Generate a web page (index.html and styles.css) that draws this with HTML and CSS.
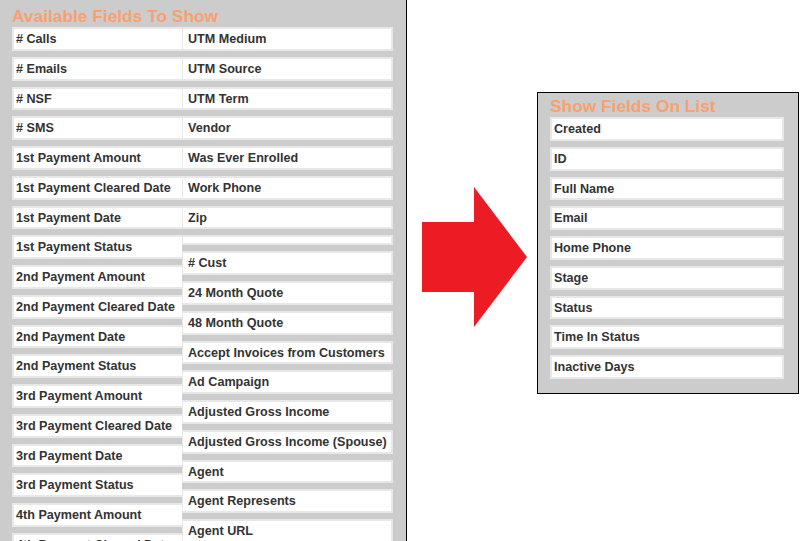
FILE: index.html
```html
<!DOCTYPE html>
<html lang="en">
<head>
    <meta charset="UTF-8">
    <meta name="viewport" content="width=device-width, initial-scale=1.0">
    <title>List Fields</title>
    <link rel="stylesheet" href="styles.css">
</head>
<body>
    <div class="fields-page">
        <div class="field-panel available-panel">
            <h2 class="panel-title">Available Fields To Show</h2>
            <div class="field-columns">
                <div class="field-list col-a">
                    <div class="field"># Calls</div>
                    <div class="field"># Emails</div>
                    <div class="field"># NSF</div>
                    <div class="field"># SMS</div>
                    <div class="field">1st Payment Amount</div>
                    <div class="field">1st Payment Cleared Date</div>
                    <div class="field">1st Payment Date</div>
                    <div class="field">1st Payment Status</div>
                    <div class="field">2nd Payment Amount</div>
                    <div class="field">2nd Payment Cleared Date</div>
                    <div class="field">2nd Payment Date</div>
                    <div class="field">2nd Payment Status</div>
                    <div class="field">3rd Payment Amount</div>
                    <div class="field">3rd Payment Cleared Date</div>
                    <div class="field">3rd Payment Date</div>
                    <div class="field">3rd Payment Status</div>
                    <div class="field">4th Payment Amount</div>
                    <div class="field">4th Payment Cleared Date</div>
                    <div class="field">4th Payment Date</div>
                </div>
                <div class="field-list col-b">
                    <div class="field">UTM Medium</div>
                    <div class="field">UTM Source</div>
                    <div class="field">UTM Term</div>
                    <div class="field">Vendor</div>
                    <div class="field">Was Ever Enrolled</div>
                    <div class="field">Work Phone</div>
                    <div class="field">Zip</div>
                    <div class="field"></div>
                    <div class="field"># Cust</div>
                    <div class="field">24 Month Quote</div>
                    <div class="field">48 Month Quote</div>
                    <div class="field">Accept Invoices from Customers</div>
                    <div class="field">Ad Campaign</div>
                    <div class="field">Adjusted Gross Income</div>
                    <div class="field">Adjusted Gross Income (Spouse)</div>
                    <div class="field">Agent</div>
                    <div class="field">Agent Represents</div>
                    <div class="field">Agent URL</div>
                    <div class="field">Alt Phone</div>
                </div>
            </div>
        </div>

        <svg class="move-arrow" width="130" height="140" viewBox="0 0 130 140">
            <polygon points="15,35 67,35 67,0 120,70 67,140 67,105 15,105" fill="#ed1c24"/>
        </svg>

        <div class="field-panel list-panel">
            <h2 class="panel-title">Show Fields On List</h2>
            <div class="field-list">
                <div class="field">Created</div>
                <div class="field">ID</div>
                <div class="field">Full Name</div>
                <div class="field">Email</div>
                <div class="field">Home Phone</div>
                <div class="field">Stage</div>
                <div class="field">Status</div>
                <div class="field">Time In Status</div>
                <div class="field">Inactive Days</div>
            </div>
        </div>
    </div>
</body>
</html>
```

FILE: styles.css
```css
/* Base styles */
body {
    font-family: 'Liberation Sans', Arial, sans-serif;
    background-color: #fff;
    margin: 0;
    padding: 0;
    height: 541px;
    overflow: hidden;
}

.fields-page {
    display: flex;
    align-items: flex-start;
}

.field-panel {
    background-color: #cccccc;
    box-sizing: border-box;
}

.panel-title {
    margin: 0 0 1px;
    font-size: 17.33px;
    line-height: 20px;
    font-weight: bold;
    color: #f9a070;
}

/* Left panel */
.available-panel {
    width: 407px;
    height: 560px;
    padding: 6px 13px 0 12px;
    border-right: 1px solid #000;
    overflow: hidden;
}

.field-columns {
    display: flex;
    align-items: flex-start;
}

.col-a {
    width: 170px;
}

.col-b {
    width: 211px;
}

.col-a .field {
    border-right-width: 0;
}

.col-b .field {
    border-left-width: 1px;
    padding-left: 5px;
}

/* Field boxes */
.field-list {
    display: flex;
    flex-direction: column;
    gap: 6px;
}

.field {
    background-color: #fff;
    border: 2px solid #e8e8e8;
    padding: 4px 2px 2px;
    font-size: 12.6px;
    line-height: 13.75px;
    font-weight: bold;
    color: #333;
    white-space: nowrap;
    overflow: hidden;
}

/* Arrow */
.move-arrow {
    display: block;
    flex-shrink: 0;
    margin-top: 187px;
}

/* Right panel */
.list-panel {
    width: 262px;
    margin-top: 92px;
    padding: 3px 14px 14px 12px;
    border: 1px solid #000;
}
```
